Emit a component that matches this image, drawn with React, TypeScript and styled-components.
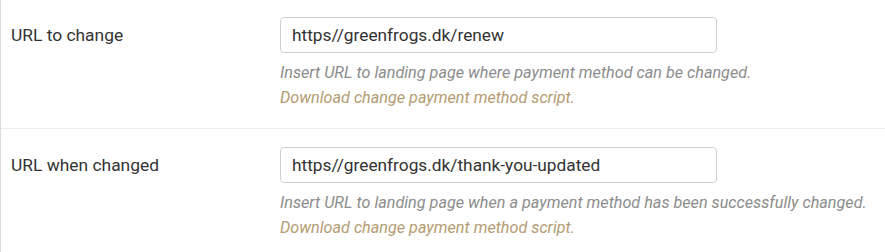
import styled, { createGlobalStyle } from 'styled-components';

const GlobalStyle = createGlobalStyle`
  html, body {
    margin: 0;
    padding: 0;
    background: #fff;
  }
  body {
    font-family: Roboto, "Liberation Sans", Arial, sans-serif;
  }
`;

const Panel = styled.div`
  width: 885px;
  border-left: 1px solid #dcdcdc;
  box-sizing: border-box;
`;

const Row = styled.div`
  display: grid;
  grid-template-columns: 279px 1fr;
  padding: 17px 0 18px 0;
  border-bottom: 1px solid #ececec;

  &:last-child {
    border-bottom: none;
    padding-top: 18px;
  }
`;

const Label = styled.label`
  height: 36px;
  display: flex;
  align-items: center;
  padding-left: 10px;
  font-size: 17.4px;
  color: #333;
`;

const Field = styled.div`
  display: flex;
  flex-direction: column;
`;

const Input = styled.input`
  width: 437px;
  height: 36px;
  box-sizing: border-box;
  border: 1px solid #cfcfcf;
  border-radius: 4px;
  padding: 0 10px 0 11px;
  font-family: Roboto, "Liberation Sans", Arial, sans-serif;
  font-size: 17.3px;
  color: #333;
  background: #fff;
  outline: none;
`;

const Help = styled.p<{ $link?: boolean }>`
  margin: 0;
  font-size: 16.2px;
  line-height: 25px;
  font-style: italic;
  white-space: nowrap;
  color: ${(p) => (p.$link ? '#b49c72' : '#8c8c8c')};

  &:first-of-type {
    margin-top: 7px;
  }
`;

type Setting = {
  label: string;
  value: string;
  help: string;
};

const settings: Setting[] = [
  {
    label: 'URL to change',
    value: 'https//greenfrogs.dk/renew',
    help: 'Insert URL to landing page where payment method can be changed.',
  },
  {
    label: 'URL when changed',
    value: 'https//greenfrogs.dk/thank-you-updated',
    help: 'Insert URL to landing page when a payment method has been successfully changed.',
  },
];

const App = () => {
  return (
    <>
      <GlobalStyle />
      <Panel>
        {settings.map((s) => (
          <Row key={s.label}>
            <Label>{s.label}</Label>
            <Field>
              <Input defaultValue={s.value} />
              <Help>{s.help}</Help>
              <Help $link>Download change payment method script.</Help>
            </Field>
          </Row>
        ))}
      </Panel>
    </>
  );
};

export default App;
